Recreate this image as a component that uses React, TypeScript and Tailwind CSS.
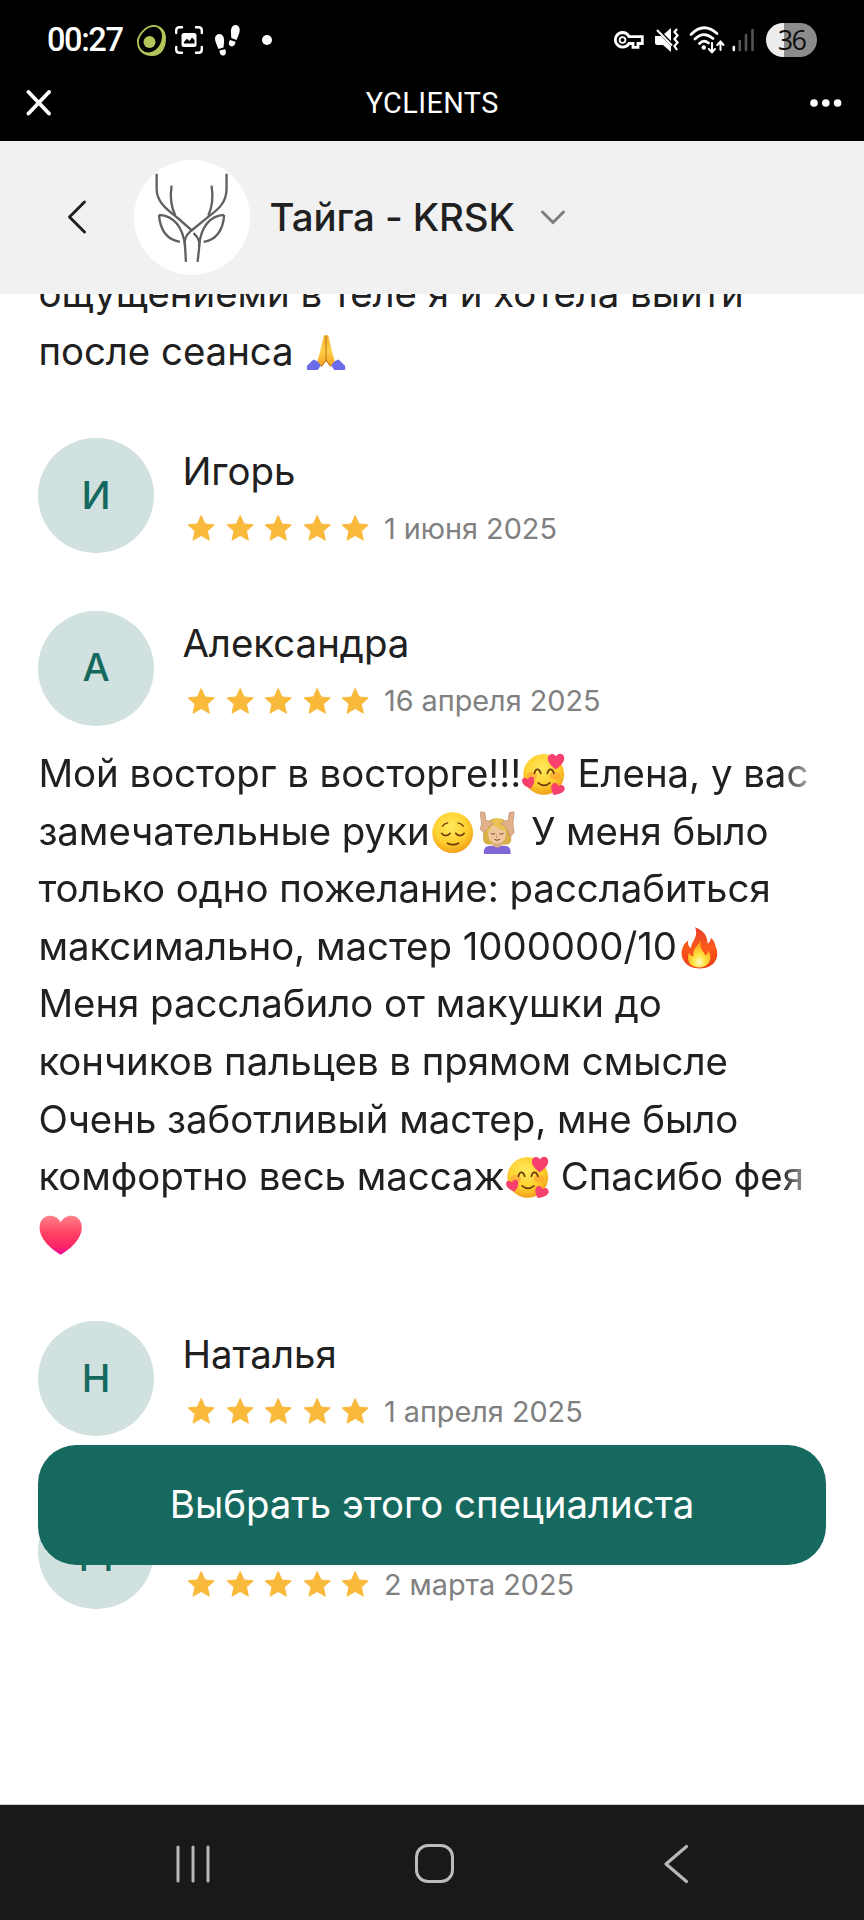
import React, { type FC } from "react";

interface EmojiProps {
  label: string;
  viewBox: string;
  children: React.ReactNode;
}
const Emoji: FC<EmojiProps> = ({ label, viewBox, children }) => (
  <svg role="img" aria-label={label} viewBox={viewBox} className="size-[45.4px] shrink-0">
    {children}
  </svg>
);

const Gradients = () => (
  <svg className="absolute size-0" aria-hidden="true">
    <defs>
      <radialGradient id="face" cx="0.45" cy="0.35" r="0.68">
        <stop offset="0" stopColor="#ffe95c" />
        <stop offset="0.6" stopColor="#ffd02f" />
        <stop offset="1" stopColor="#f09a17" />
      </radialGradient>
      <linearGradient id="heart" x1="0" y1="0" x2="0" y2="1">
        <stop offset="0" stopColor="#ff8088" />
        <stop offset="0.5" stopColor="#ff3d62" />
        <stop offset="0.8" stopColor="#fb2468" />
        <stop offset="1" stopColor="#e8069a" />
      </linearGradient>
      <linearGradient id="flame" x1="0" y1="0" x2="0" y2="1">
        <stop offset="0" stopColor="#e8402a" />
        <stop offset="0.5" stopColor="#fa5a1c" />
        <stop offset="1" stopColor="#ee3a16" />
      </linearGradient>
      <radialGradient id="flameCore" cx="0.5" cy="0.8" r="0.7">
        <stop offset="0" stopColor="#fffbc0" />
        <stop offset="0.4" stopColor="#ffe13c" />
        <stop offset="1" stopColor="#ff9d1e" />
      </radialGradient>
      <linearGradient id="hand" x1="0" y1="0" x2="0" y2="1">
        <stop offset="0" stopColor="#f5b12c" />
        <stop offset="0.5" stopColor="#ffcf47" />
        <stop offset="1" stopColor="#f3a022" />
      </linearGradient>
    </defs>
  </svg>
);

const Loved = () => (
  <Emoji label="🥰" viewBox="304 31 138 138">
    <circle cx="373" cy="102" r="62" fill="url(#face)" />
    <ellipse cx="337" cy="106" rx="16" ry="12" fill="#ff8a35" opacity="0.45" />
    <ellipse cx="407" cy="106" rx="16" ry="12" fill="#ff8a35" opacity="0.45" />
    <path
      d="M345 99Q347 87 354 87Q361 87 364 99M384 99Q387 87 394 87Q401 87 404 99M356 128Q374 143 392 128"
      fill="none"
      stroke="#6b3a0c"
      strokeWidth="5"
      strokeLinecap="round"
    />
    <path d="M409 87C395 75 383 63 386 51C389 38 405 37 410 48C416 35 432 37 435 49C438 63 424 77 409 87Z" fill="#f7406d" />
    <path d="M333 145C318 141 307 132 307 121C308 111 320 109 325 118C328 107 342 107 344 117C346 127 341 136 333 145Z" fill="#f7406d" />
    <path d="M403 165C397 152 393 140 399 132C406 124 417 129 417 138C425 131 437 135 437 146C436 157 420 163 403 165Z" fill="#f7406d" />
  </Emoji>
);

const Relieved = () => (
  <Emoji label="😌" viewBox="27 204 138 138">
    <circle cx="96" cy="276" r="62" fill="url(#face)" />
    <path
      d="M62 278Q67 285 75 285Q83 285 88 278M105 278Q110 285 118 285Q126 285 131 278M80 308Q97 317 114 308"
      fill="none"
      stroke="#6b3a0c"
      strokeWidth="5"
      strokeLinecap="round"
    />
    <path d="M65 256Q70 248 81 246M112 246Q123 248 128 256" fill="none" stroke="#6b3a0c" strokeWidth="4" strokeLinecap="round" />
  </Emoji>
);

const Massage = () => (
  <Emoji label="💆🏼‍♀️" viewBox="165 204 138 138">
    <path d="M190 300C187 262 198 232 232 232C267 232 277 262 275 302Q269 314 257 312H207Q194 312 190 300Z" fill="#d8ae45" />
    <path d="M192 342V330Q194 317 212 316H253Q271 317 273 330V342Z" fill="#8066d6" />
    <path d="M220 300H246V316Q233 327 220 316Z" fill="#d9a982" />
    <path d="M205 268Q205 249 232 248Q259 249 259 268V283Q257 308 232 310Q207 308 205 283Z" fill="#efc79d" />
    <path d="M200 277Q213 269 218 252Q236 266 262 273V256Q253 234 232 234Q202 234 200 277Z" fill="#e9c455" />
    <path d="M181 215Q182 211 186 213L195 215L198 239L212 241L222 249Q210 253 206 262L193 276L181 266L185 249Z" fill="#e2b18b" stroke="#b98762" strokeWidth="2" />
    <path d="M284 215Q283 211 279 213L269 215L266 239L253 241L243 249Q256 253 260 262L272 289L284 276L280 249Z" fill="#e2b18b" stroke="#b98762" strokeWidth="2" />
    <path d="M214 279Q219 283 225 279M240 279Q246 283 251 279M225 297Q232 302 240 297" fill="none" stroke="#75452b" strokeWidth="3" strokeLinecap="round" />
    <path d="M232 281L230 290H235" fill="none" stroke="#bd8763" strokeWidth="2" />
  </Emoji>
);

const Fire = () => (
  <Emoji label="🔥" viewBox="114 69 138 138">
    <path
      d="M169 79C194 88 207 105 207 129C214 125 217 118 217 111C228 121 229 128 232 138C247 174 224 204 183 204C143 204 121 174 130 144C133 133 139 126 148 119C146 130 149 138 157 143C156 122 181 111 169 79Z"
      fill="url(#flame)"
    />
    <path
      d="M187 118C179 145 196 151 200 165C207 161 209 154 207 147C225 169 214 200 183 201C152 202 141 180 151 156C154 164 158 167 164 166C160 147 175 139 187 118Z"
      fill="url(#flameCore)"
    />
  </Emoji>
);

const Pray = () => (
  <Emoji label="🙏" viewBox="45 24 138 138">
    <path d="M105 45Q108 40 112 44Q116 40 119 45L131 96L139 124L126 139L112 122L98 139L85 124L93 96Z" fill="url(#hand)" />
    <path d="M112 45V119L98 138M112 119L126 138" fill="none" stroke="#b96c12" strokeWidth="3" />
    <path d="M54 136L74 117Q89 122 96 135L87 149H54Z" fill="#6b6bea" />
    <path d="M170 136L150 117Q135 122 128 135L137 149H170Z" fill="#6b6bea" />
  </Emoji>
);

const Heart = () => (
  <Emoji label="❤️" viewBox="0 0 46 46">
    <path d="M23 43.4C14 38 1.6 28 1.6 15.8C1.6 8.5 6.5 3.9 12.3 3.9C17 3.9 20.6 6.2 23 10.4C25.4 6.2 29 3.9 33.7 3.9C39.5 3.9 44.4 8.5 44.4 15.8C44.4 28 32 38 23 43.4Z" fill="url(#heart)" />
  </Emoji>
);

const StatusBar = () => (
  <div className="flex h-[66px] items-center pt-[14px] pl-[47px] pr-[47px] text-white">
    <span className="w-[90px] font-['Roboto'] text-[32.5px] leading-[52px] font-medium tracking-[-1.4px]">00:27</span>
    <svg viewBox="0 0 29 31" className="h-[31px] w-[29px]">
      <path
        fillRule="evenodd"
        d="M17 0C23 0 29 5 29 13C29 24 24 31 15 31C6 31 0 25 0 17C0 10 8 0 17 0ZM16.500 1.800C9 2 1.800 11 1.800 17C1.800 23 6 27.500 11.500 27.500C19 27.500 25.500 19 25 10C24.500 5 21 1.700 16.500 1.800Z"
        fill="#b5c55a"
      />
      <circle cx="12.500" cy="17" r="6" fill="#b5c55a" />
    </svg>
    <svg viewBox="0 0 28 28" className="ml-[9px] size-[28px]">
      <path d="M1.200 7V4.500Q1.200 1.200 4.500 1.200H7M21 1.200H23.500Q26.800 1.200 26.800 4.500V7M26.800 21V23.500Q26.800 26.800 23.500 26.800H21M7 26.800H4.500Q1.200 26.800 1.200 23.500V21" fill="none" stroke="#fff" strokeWidth="2.400" strokeLinecap="round" />
      <rect x="6.500" y="7" width="15" height="14" rx="2.500" fill="#fff" />
      <path d="M9 17.500V16L12 12.800L14.500 15L17 11.500L19.500 14V17.500Z" fill="#000" />
    </svg>
    <svg viewBox="0 0 25 31" className="ml-[12px] h-[31px] w-[25px]" fill="#fff">
      <path d="M4.500 9C8 9 9.500 13 9 17L8.500 22.500L3.500 24C2 20 0 17 0 13.500C0 11 2 9 4.500 9Z" />
      <path d="M4.500 25.500L10 24.300C11.500 27 11 30 8.500 30.500C6 31 4.500 28.500 4.500 25.500Z" />
      <path d="M20.500 0C17 0 15.500 4 16 8L16.300 13L21.500 15C23 11 25 8 24.700 4.500C24.500 2 23 0 20.500 0Z" />
      <path d="M20.500 16.800L15 15C13.200 17.500 13.300 20.500 16 21.300C18.500 22 20.300 20 20.500 16.800Z" />
    </svg>
    <span className="ml-[22px] size-[10px] rounded-full bg-white" />
    <svg viewBox="0 0 30 18" className="ml-auto h-[18px] w-[30px]">
      <path d="M8.500 1.500A7.300 7.300 0 1 0 15 12.500H19V16.300H24V12.500H28.300V5.700H15A7.300 7.300 0 0 0 8.500 1.500Z" fill="none" stroke="#fff" strokeWidth="2.800" />
      <circle cx="8.500" cy="9" r="2.900" fill="none" stroke="#fff" strokeWidth="1.800" />
    </svg>
    <svg viewBox="0 0 24 24" className="ml-[11px] size-[24px]">
      <path d="M0 8H6L16 18V24L8 17H2Q0 17 0 15ZM9 6L16 0V13Z" fill="#fff" />
      <path d="M2 2L17 17.500" stroke="#fff" strokeWidth="2" />
      <path d="M22 1L19.500 4L22.500 7.500L19.500 11L22.500 14.500L19.500 18L22 22" fill="none" stroke="#fff" strokeWidth="2.200" />
    </svg>
    <svg viewBox="0 0 36 28" className="ml-[10px] h-[28px] w-[36px]" fill="none" stroke="#fff" strokeWidth="2.700" strokeLinecap="round">
      <path d="M2 8.500Q14.500 -4.500 28 7.500M6 13Q14.500 4.500 24 12.500M10.500 17.500Q14.500 13 19.500 17" />
      <circle cx="14.800" cy="21.500" r="2.200" fill="#fff" stroke="none" />
      <path d="M23 17V26M19.800 23L23 26.300L26 23M31.500 24V16M28.300 19L31.500 15.500L34.500 19" strokeWidth="2" />
    </svg>
    <svg viewBox="0 0 23 24" className="ml-[7px] h-[24px] w-[23px]" strokeWidth="2.600" strokeLinecap="round">
      <path d="M1.800 19V22" stroke="#fff" />
      <path d="M7.800 13V22M14 7V22M20.500 2V22" stroke="#555" />
    </svg>
    <span className="ml-[11px] flex h-[34px] w-[51px] shrink-0 items-center justify-center rounded-full bg-linear-to-r from-[#ececec] from-36% to-[#8c8c8c] to-36% font-['Open_Sans'] text-[27px] font-medium tracking-[-1.6px] text-[#111]">
      36
    </span>
  </div>
);

const AppBar = () => (
  <div className="flex h-[74px] items-center justify-between pr-[22px] pl-[25.500px] text-white">
    <svg viewBox="0 0 26 26" className="size-[26px]">
      <path d="M2.500 2L23 23.500M23 2L2.500 23.500" stroke="#fff" strokeWidth="3.800" strokeLinecap="round" />
    </svg>
    <span className="pt-[1px] pl-[3px] font-['Roboto'] text-[28.8px] tracking-[0.45px]">YCLIENTS</span>
    <svg viewBox="0 0 32 8" className="h-[8px] w-[32px]" fill="#fff">
      <circle cx="4" cy="4" r="3.800" />
      <circle cx="15.800" cy="4" r="3.800" />
      <circle cx="27.600" cy="4" r="3.800" />
    </svg>
  </div>
);

const Header = () => (
  <header className="flex h-[153.6px] shrink-0 items-center bg-[#f1f1f1] pl-[66px] text-[#202020]">
    <svg viewBox="0 0 22 36" className="h-[36px] w-[22px]">
      <path d="M18.500 3L3.500 18L18.500 33" fill="none" stroke="#202020" strokeWidth="3" strokeLinecap="round" strokeLinejoin="round" />
    </svg>
    <svg viewBox="43 30 346 346" className="ml-[46.4px] size-[115.2px] rounded-full bg-white" fill="none" stroke="#606060" strokeWidth="7">
      <path d="M111 71V116C111 160 148 182 175 205L215 240" />
      <path d="M321 71V116C321 162 290 182 267 200L213 244C190 264 196 278 197 300L199 336" />
      <path d="M156 107C150 145 154 170 167 197M276 107C282 145 279 170 266 197" />
      <path d="M222 250C242 268 240 280 238 300L234 336" />
      <path d="M118 195C165 198 190 235 197 290M118 195C122 245 145 270 181 276" />
      <path d="M314 195C268 198 244 235 238 290M314 195C310 245 290 270 252 276" />
    </svg>
    <h1 className="ml-[20px] text-[38.4px] font-medium tracking-[-0.1px]">Тайга - KRSK</h1>
    <svg viewBox="0 0 26 16" className="ml-[25px] h-[16px] w-[26px]">
      <path d="M2.500 3L13 13.500L23.500 3" fill="none" stroke="#7d7d7d" strokeWidth="3" strokeLinecap="round" />
    </svg>
  </header>
);

interface ReviewProps {
  name: string;
  date: string;
  children?: React.ReactNode;
}
const Review: FC<ReviewProps> = ({ name, date, children }) => (
  <article className="mb-[57.6px]">
    <div className="flex h-[115.2px]">
      <div className="flex size-[115.2px] items-center justify-center rounded-full bg-[#d1e1df] text-[38.4px] font-medium text-[#15695f]">
        {name[0]}
      </div>
      <div className="ml-[28.8px] pt-[4.8px]">
        <h2 className="h-[57.6px] text-[38.4px] leading-[57.6px]">{name}</h2>
        <div className="flex h-[56px] items-center">
          {[1, 2, 3, 4, 5].map((star) => (
            <svg key={star} viewBox="0 0 38.4 38.4" className="size-[38.4px]">
              <path
                d="M19.200 6.500L23 14.900L32.300 15.900L25.400 22.100L27.400 31.200L19.200 26.500L11 31.200L13 22.100L6.100 15.900L15.400 14.900Z"
                fill="#f9b93b"
                stroke="#f9b93b"
                strokeWidth="1"
                strokeLinejoin="round"
              />
            </svg>
          ))}
          <span className="ml-[9.6px] text-[28.8px] text-[#808080]">{date}</span>
        </div>
      </div>
    </div>
    {children}
  </article>
);

const Line: FC<{ children: React.ReactNode }> = ({ children }) => (
  <p className="flex h-[57.6px] items-center text-[38.4px] leading-[57.6px] tracking-[-0.03px] whitespace-pre">{children}</p>
);

export default function App() {
  return (
    <div className="relative flex h-[1920px] w-[864px] flex-col overflow-hidden bg-white font-['Inter',sans-serif] text-[#202020]">
      <Gradients />
      <div className="h-[140.6px] shrink-0 bg-black">
        <StatusBar />
        <AppBar />
      </div>
      <Header />
      <main className="h-[1509.8px] shrink-0 overflow-hidden px-[38.4px]">
        <div className="-mt-[29.1px] mb-[57.6px]">
          <Line>ощущениеми в теле я и хотела выйти</Line>
          <Line>после сеанса <Pray /></Line>
        </div>
        <Review name="Игорь" date="1 июня 2025" />
        <Review name="Александра" date="16 апреля 2025">
          <div className="mt-[19.2px] mask-r-from-[742px] mask-r-to-[787px]">
            <Line>Мой восторг в восторге!!!<Loved /> Елена, у вас</Line>
            <Line>замечательные руки<Relieved /><Massage /> У меня было</Line>
            <Line>только одно пожелание: расслабиться</Line>
            <Line>максимально, мастер 1000000/10<Fire /></Line>
            <Line>Меня расслабило от макушки до</Line>
            <Line>кончиков пальцев в прямом смысле</Line>
            <Line>Очень заботливый мастер, мне было</Line>
            <Line>комфортно весь массаж<Loved /> Спасибо фея</Line>
            <Line><Heart /></Line>
          </div>
        </Review>
        <Review name="Наталья" date="1 апреля 2025" />
        <Review name="Диана" date="2 марта 2025" />
      </main>
      <button className="absolute top-[1444.8px] left-[38.4px] h-[120px] w-[787.2px] rounded-[38.4px] bg-[#15695f] text-[38.4px] text-white">
        Выбрать этого специалиста
      </button>
      <nav className="flex h-[116px] items-center border-t border-[#c5cfcd] bg-[#191919] pt-[3px] pl-[176px]">
        <svg viewBox="0 0 36 38" className="h-[38px] w-[36px]" stroke="#b8b8b8" strokeWidth="3" strokeLinecap="round">
          <path d="M2 2V36M17 2V36M32 2V36" />
        </svg>
        <span className="ml-[203px] size-[39px] rounded-[13px] border-[3px] border-[#bcbcbc]" />
        <svg viewBox="0 0 26 40" className="ml-[209px] h-[40px] w-[26px]">
          <path d="M23.500 2.500L3 20L23.500 37.500" fill="none" stroke="#b8b8b8" strokeWidth="3.200" strokeLinecap="round" strokeLinejoin="round" />
        </svg>
      </nav>
    </div>
  );
}
